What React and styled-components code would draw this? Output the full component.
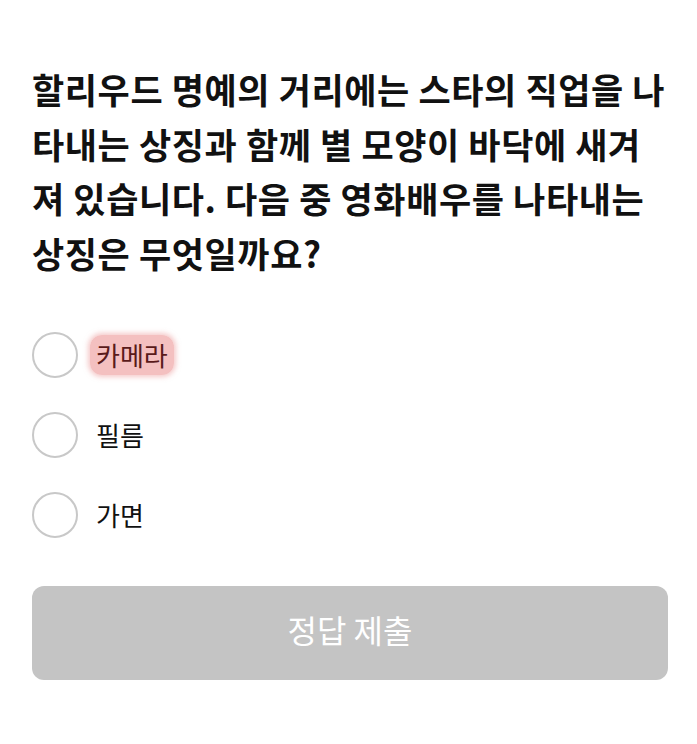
import React, { useState } from 'react';
import styled, { createGlobalStyle } from 'styled-components';

const GlobalStyle = createGlobalStyle`
  body {
    margin: 0;
    background: #ffffff;
    font-family: "Noto Sans CJK KR", "Noto Sans", sans-serif;
  }
`;

const Page = styled.main`
  padding: 62px 29px 40px 32px;
`;

const Question = styled.h1`
  margin: 0;
  font-size: 35px;
  font-weight: 700;
  line-height: 54.5px;
  color: #111111;
  letter-spacing: 0.6px;
`;

const Options = styled.div`
  display: flex;
  flex-direction: column;
  gap: 34px;
  margin-top: 52px;
`;

const Option = styled.label`
  display: flex;
  align-items: center;
  gap: 12px;
  cursor: pointer;
`;

const Circle = styled.span`
  width: 42px;
  height: 42px;
  border-radius: 50%;
  border: 2px solid #c8c8c8;
  flex-shrink: 0;
  background: ${p => (p.checked ? '#c8c8c8' : '#ffffff')};
`;

const Label = styled.span`
  font-size: 26px;
  line-height: 36px;
  color: ${p => (p.marked ? '#5a1a1a' : '#111111')};
  padding: 2px 6px;
  margin: -2px 0;
  border-radius: 12px;
  background: ${p => (p.marked ? 'rgba(236, 150, 150, 0.6)' : 'transparent')};
  box-shadow: ${p => (p.marked ? '0 0 5px 2px rgba(236, 150, 150, 0.5)' : 'none')};
`;

const Submit = styled.button`
  display: block;
  width: 100%;
  height: 94px;
  margin-top: 48px;
  padding: 0 0 8px;
  border: none;
  border-radius: 12px;
  background: #c4c4c4;
  color: #ffffff;
  font-family: inherit;
  font-size: 32px;
  font-weight: 400;
`;

const choices = [
  { id: 1, text: '카메라', marked: true },
  { id: 2, text: '필름' },
  { id: 3, text: '가면' },
];

const App = () => {
  const [selected, setSelected] = useState(null);

  return (
    <>
      <GlobalStyle />
      <Page>
        <Question>
          할리우드 명예의 거리에는 스타의 직업을 나타내는 상징과 함께 별 모양이 바닥에 새겨져 있습니다. 다음 중 영화배우를 나타내는 상징은 무엇일까요?
        </Question>
        <Options>
          {choices.map(c => (
            <Option key={c.id} onClick={() => setSelected(c.id)}>
              <Circle checked={selected === c.id} />
              <Label marked={c.marked}>{c.text}</Label>
            </Option>
          ))}
        </Options>
        <Submit disabled={selected === null}>정답 제출</Submit>
      </Page>
    </>
  );
};

export default App;
